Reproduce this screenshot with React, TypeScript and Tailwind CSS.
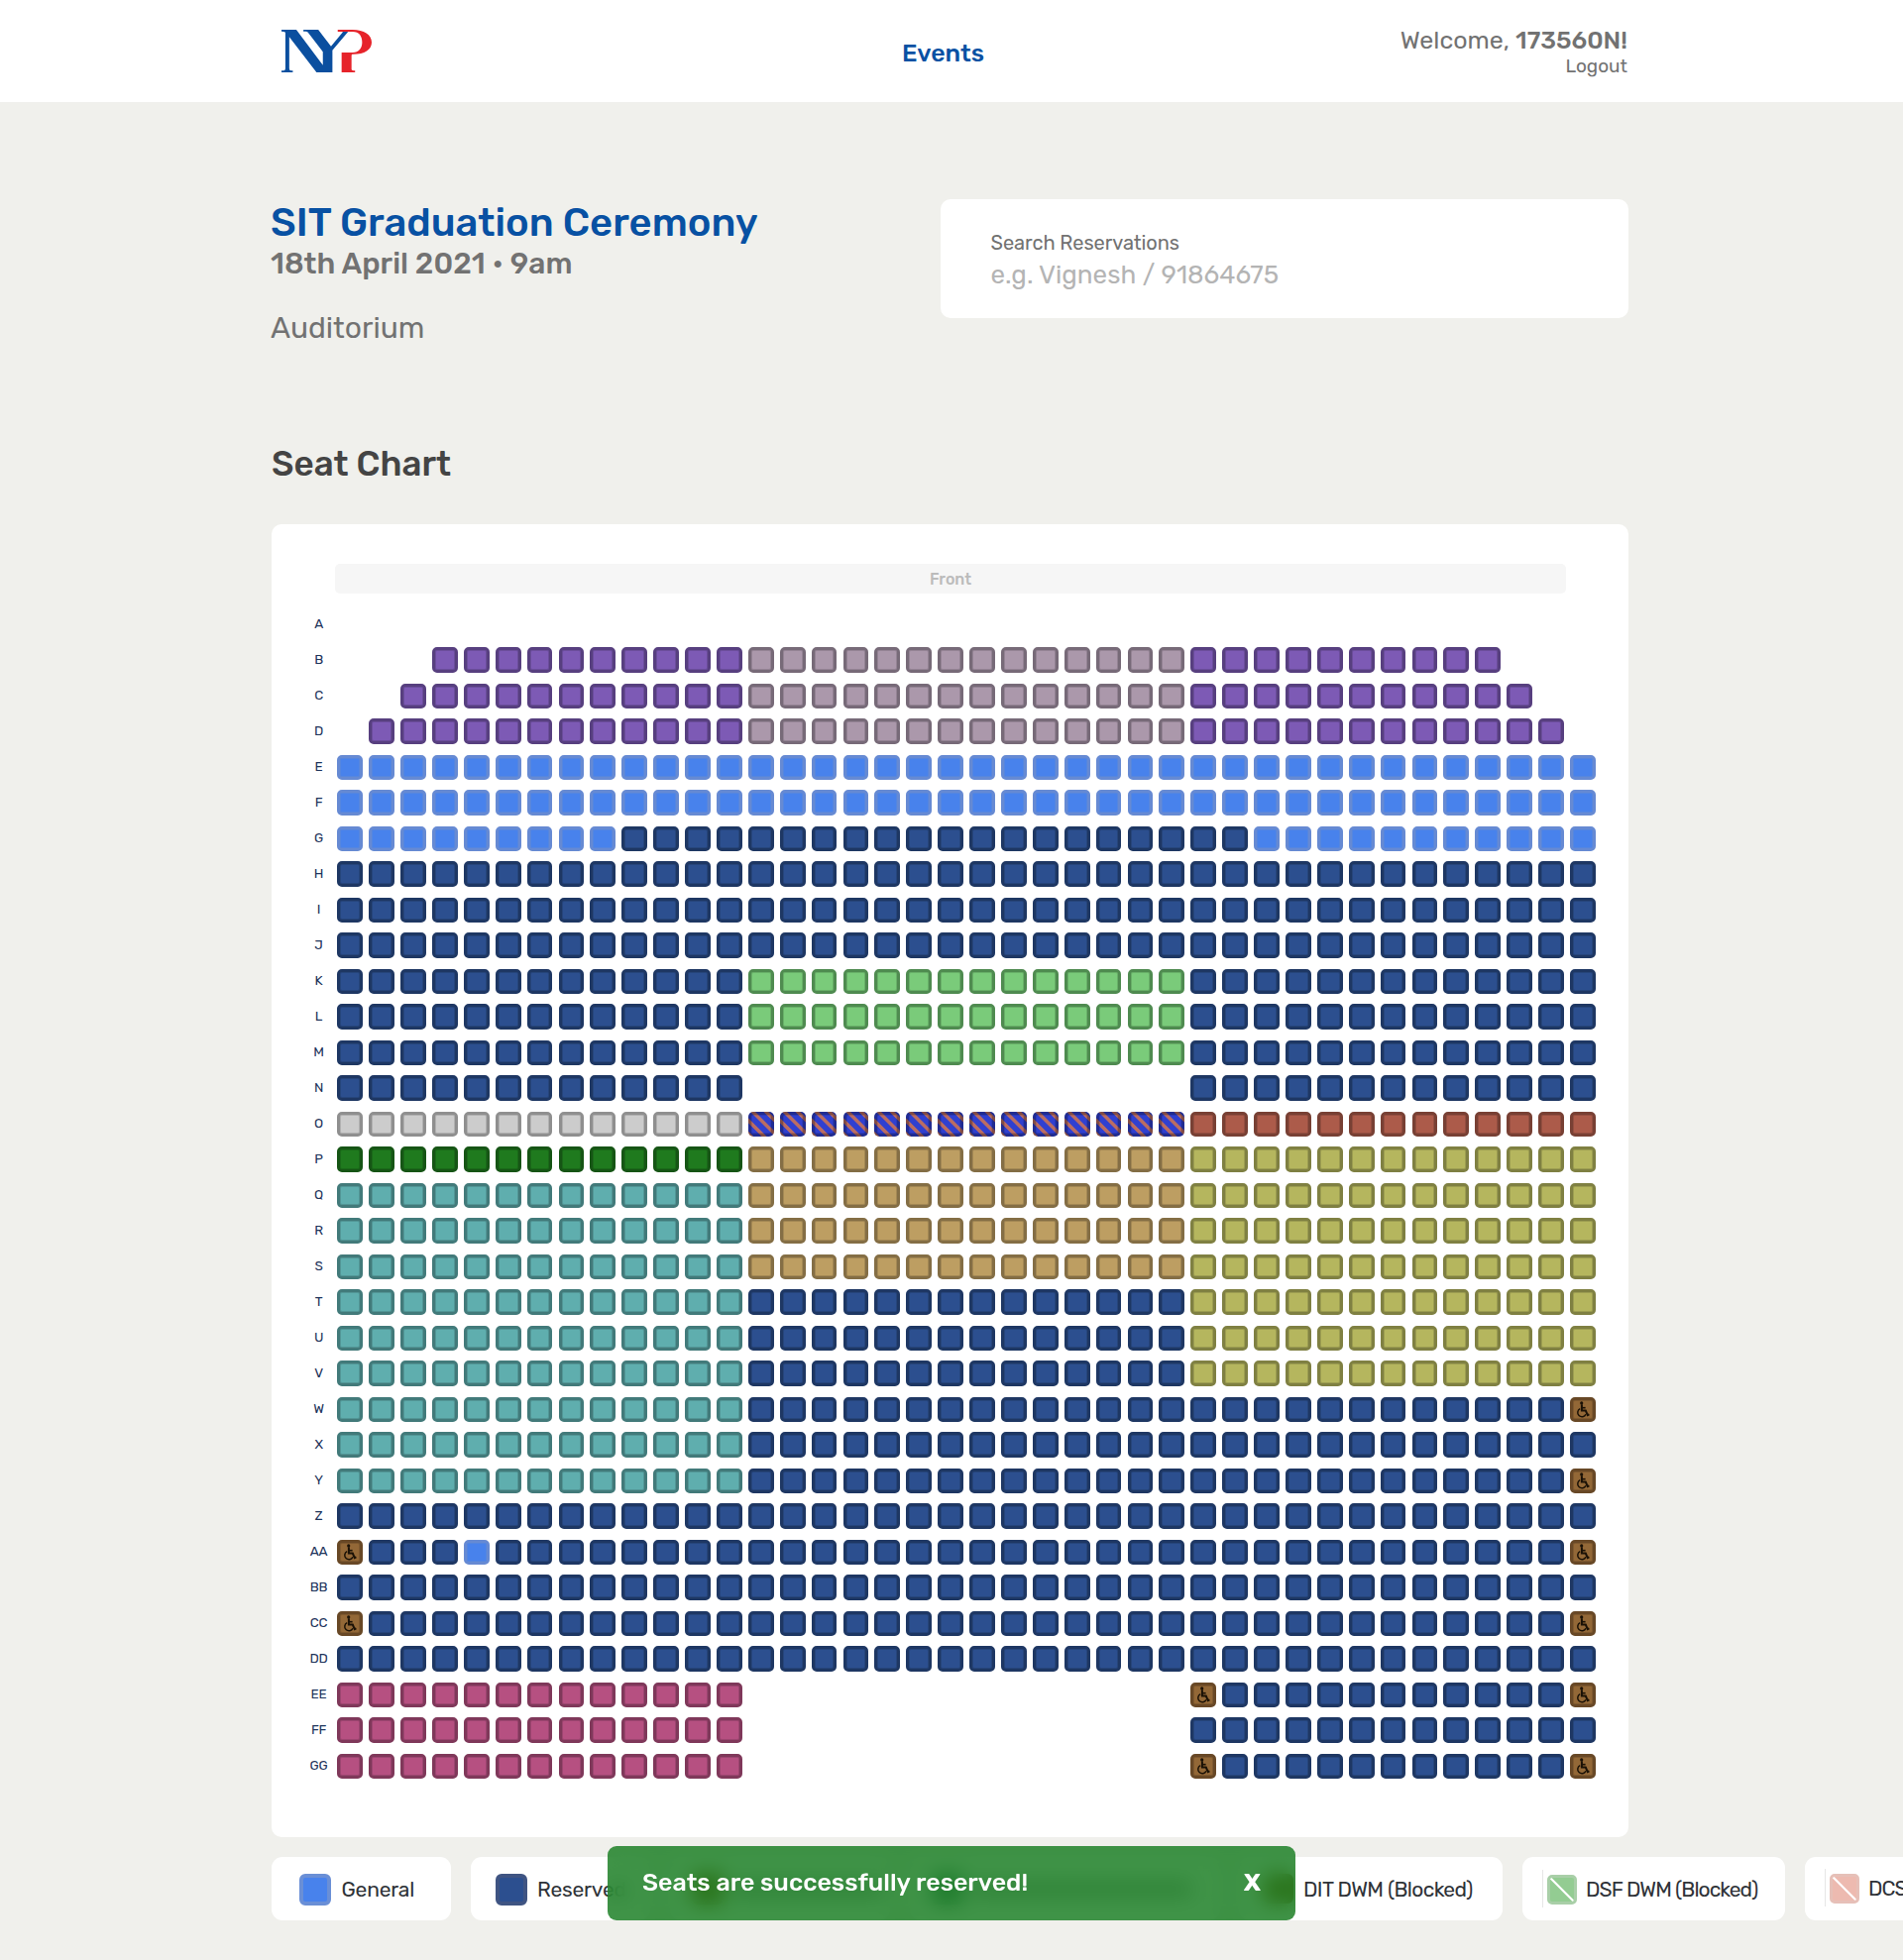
import { clsx } from "clsx";

type Kind =
  | "empty" | "purple" | "mauve" | "general" | "reserved" | "mint" | "gray" | "striped"
  | "brick" | "forest" | "tan" | "olive" | "teal" | "pink" | "wheelchair";

type Run = [Kind, number];

const FILL: Record<Kind, string> = {
  empty: "",
  purple: "bg-[#7d5ab5] border-[#573f7f] inset-ring-[#6b4d9b]",
  mauve: "bg-[#ab98ab] border-[#776a78] inset-ring-[#948394]",
  general: "bg-[#4882ec] border-[#668ad3] inset-ring-[#5586df]",
  reserved: "bg-[#2c4f8f] border-[#1e3763] inset-ring-[#26457b]",
  mint: "bg-[#7acb7a] border-[#4f8b50] inset-ring-[#68b068]",
  gray: "bg-[#cccccc] border-[#8f8f8f] inset-ring-[#b1b1b1]",
  striped:
    "border-black/30 inset-ring-black/10 bg-origin-border bg-[repeating-linear-gradient(45deg,#3040d0_0px,#bb6d62_0.6px,#bb6d62_3.4px,#3040d0_4.2px,#3040d0_9.4px)]",
  brick: "bg-[#ac5b4a] border-[#784034] inset-ring-[#944e40]",
  forest: "bg-[#1f7a1e] border-[#165515] inset-ring-[#1a6919]",
  tan: "bg-[#bd9e62] border-[#846e45] inset-ring-[#a38854]",
  olive: "bg-[#b5b65e] border-[#7f8042] inset-ring-[#9c9d51]",
  teal: "bg-[#5faeae] border-[#427a7a] inset-ring-[#529696]",
  pink: "bg-[#b65081] border-[#7f385a] inset-ring-[#9c4570]",
  wheelchair: "bg-[#936837] border-[#684826] inset-ring-[#7f592f]",
};

const all: Run[] = [["reserved", 40]];
const generalRow: Run[] = [["general", 40]];
const mintRow: Run[] = [["reserved", 13], ["mint", 14], ["reserved", 13]];
const tealTan: Run[] = [["teal", 13], ["tan", 14], ["olive", 13]];
const tealOlive: Run[] = [["teal", 13], ["reserved", 14], ["olive", 13]];
const tealWheel: Run[] = [["teal", 13], ["reserved", 26], ["wheelchair", 1]];
const pinkWheel: Run[] = [["pink", 13], ["empty", 14], ["wheelchair", 1], ["reserved", 11], ["wheelchair", 1]];

const ROWS: [string, Run[]][] = [
  ["A", [["empty", 40]]],
  ["B", [["empty", 3], ["purple", 10], ["mauve", 14], ["purple", 10], ["empty", 3]]],
  ["C", [["empty", 2], ["purple", 11], ["mauve", 14], ["purple", 11], ["empty", 2]]],
  ["D", [["empty", 1], ["purple", 12], ["mauve", 14], ["purple", 12], ["empty", 1]]],
  ["E", generalRow],
  ["F", generalRow],
  ["G", [["general", 9], ["reserved", 20], ["general", 11]]],
  ["H", all],
  ["I", all],
  ["J", all],
  ["K", mintRow],
  ["L", mintRow],
  ["M", mintRow],
  ["N", [["reserved", 13], ["empty", 14], ["reserved", 13]]],
  ["O", [["gray", 13], ["striped", 14], ["brick", 13]]],
  ["P", [["forest", 13], ["tan", 14], ["olive", 13]]],
  ["Q", tealTan],
  ["R", tealTan],
  ["S", tealTan],
  ["T", tealOlive],
  ["U", tealOlive],
  ["V", tealOlive],
  ["W", tealWheel],
  ["X", [["teal", 13], ["reserved", 27]]],
  ["Y", tealWheel],
  ["Z", all],
  ["AA", [["wheelchair", 1], ["reserved", 3], ["general", 1], ["reserved", 34], ["wheelchair", 1]]],
  ["BB", all],
  ["CC", [["wheelchair", 1], ["reserved", 38], ["wheelchair", 1]]],
  ["DD", all],
  ["EE", pinkWheel],
  ["FF", [["pink", 13], ["empty", 14], ["reserved", 13]]],
  ["GG", pinkWheel],
];

function Logo() {
  return (
    <svg className="h-[43px] w-[91px]" viewBox="67 88 255 129" preserveAspectRatio="none" aria-label="NYP">
      <path
        fill="#0b4f9f"
        d="M67 88H109L184 195V155L142 96Q140 93 136 93H129V88H171L207 138L239 97Q242 93 236 93H256L211 150V217H166L89 110V206Q89 212 94 212H99V217H67V212H73Q78 212 78 206V96Q76 93 67 93Z"
      />
      <path
        fill="#e6232a"
        d="M226 88H268C300 88 322 103 322 126C322 148 302 162 270 162C266 162 265 163 265 167V208Q265 212 275 212V217H237V157H268C286 157 295 143 295 126C295 108 287 94 268 94H226Z"
      />
    </svg>
  );
}

function WheelchairIcon() {
  return (
    <svg className="h-[17px] w-[14px] shrink-0" viewBox="0 0 14 17" fill="none" stroke="#1a1106" strokeWidth="1.6">
      <circle cx="5.7" cy="1.9" r="1.6" fill="#1a1106" stroke="none" />
      <path d="M5.9 3.2V9.6H9.8L11.8 14.2L13.4 13.4" strokeWidth="2" />
      <path d="M6 6.7H9.6" strokeWidth="1.6" />
      <path d="M4.2 7.6A4.3 4.3 0 1 0 10 13.2" strokeWidth="1.5" />
    </svg>
  );
}

function Seat({ kind, short }: { kind: Kind; short: boolean }) {
  if (kind === "empty") return <div />;
  return (
    <div
      className={clsx(
        "flex w-[25.8px] items-center justify-center rounded-[5px] border-3 inset-ring-1",
        short ? "mt-px h-[25px]" : "h-[26px]",
        FILL[kind],
      )}
    >
      {kind === "wheelchair" && <WheelchairIcon />}
    </div>
  );
}

function SeatRow({ label, runs, index }: { label: string; runs: Run[]; index: number }) {
  const seats = runs.flatMap(([kind, n]) => Array.from({ length: n }, () => kind));
  return (
    <div className="flex h-9">
      <div className="w-[35px] text-center text-[13.5px] leading-[25px] tracking-[-0.3px] text-[#1f355c]">{label}</div>
      <div className="ml-[1.3px] grid grid-cols-[repeat(40,31.9px)] items-start">
        {seats.map((k, i) => (
          <Seat key={i} kind={k} short={index % 2 === 0} />
        ))}
      </div>
    </div>
  );
}

const LEGEND_TEXT = "pt-0.5 text-[21px] leading-6 whitespace-nowrap text-[#2f3338]";
const CARD = "flex h-16 shrink-0 items-center rounded-[11px] bg-white";

function BlockedSwatch({ tone }: { tone: string }) {
  return (
    <div className="flex items-center">
      <div className="mr-1 h-[38px] w-px bg-[#e6e6e6]" />
      <div className={clsx("mt-px h-[30px] w-[30px] overflow-hidden rounded-[5px] border-3", tone)}>
        <svg className="-m-[3px] h-[30px] w-[30px]" viewBox="0 0 30 30">
          <path d="M2 2L28.5 28.5" stroke="#fff" strokeWidth="2.2" />
        </svg>
      </div>
    </div>
  );
}

function Legend() {
  return (
    <div className="mt-5 ml-px flex h-16">
      <div className={clsx(CARD, "w-[181px] pl-7")}>
        <div className="mt-0.5 h-8 w-8 rounded-[6px] border-4 border-[#6a8fd6] bg-[#4882ec]" />
        <span className={clsx(LEGEND_TEXT, "ml-[10.5px] tracking-[-0.2px]")}>General</span>
      </div>
      <div className={clsx(CARD, "ml-5 w-[181px] pl-[25px]")}>
        <div className="mt-0.5 h-8 w-8 rounded-[6px] border-4 border-[#3f5482] bg-[#2c4f8f]" />
        <span className={clsx(LEGEND_TEXT, "ml-2.5 tracking-[-0.2px]")}>Reserved</span>
      </div>
      <div className={clsx(CARD, "ml-5 w-[222px] pl-[22px]")}>
        <div className="h-8 w-8 rounded-[6px] bg-[#936020]" />
        <div className="ml-2.5 h-3.5 w-[150px] rounded bg-[#a5a5a5]" />
      </div>
      <div className={clsx(CARD, "ml-5 w-[313px] pl-[22px]")}>
        <div className="h-8 w-8 rounded-[6px] bg-[#5f8a7a]" />
        <div className="ml-2.5 h-3.5 w-[220px] rounded bg-[#a5a5a5]" />
      </div>
      <div className={clsx(CARD, "ml-[19px] w-[266px] pl-[25px]")}>
        <div className="h-[30px] w-[30px] rounded-[6px] bg-[#936020]" />
        <span className={clsx(LEGEND_TEXT, "ml-2.5 tracking-[-0.63px]")}>DIT DWM (Blocked)</span>
      </div>
      <div className={clsx(CARD, "ml-5 w-[265px] pl-5")}>
        <BlockedSwatch tone="bg-[#93cc92] border-[#a9cfa8]" />
        <span className={clsx(LEGEND_TEXT, "ml-[9px] tracking-[-0.93px]")}>DSF DWM (Blocked)</span>
      </div>
      <div className={clsx(CARD, "ml-5 w-[265px] pl-5")}>
        <div className="-mt-0.5 flex items-center">
          <BlockedSwatch tone="bg-[#edbab0] border-[#e6c0b8]" />
          <span className={clsx(LEGEND_TEXT, "ml-[9px] tracking-[-0.93px]")}>DCS DWM (Blocked)</span>
        </div>
      </div>
    </div>
  );
}

export default function App() {
  return (
    <div className="relative h-[1978px] w-full overflow-hidden bg-[#f0f0ec] font-['Rubik','Inter',sans-serif]">
      <header className="h-[103px] bg-white">
        <div className="ml-[284px] flex h-full w-[1358px] items-center">
          <Logo />
          <a className="ml-[535px] pt-[5px] text-[25px] leading-[30px] font-medium text-[#0851a3]">Events</a>
          <div className="ml-auto pt-0.5 text-right text-[#727272]">
            <div className="text-[25px] leading-[30px]">
              Welcome, <span className="font-medium">173560N!</span>
            </div>
            <div className="-mt-px text-[19px] leading-6">Logout</div>
          </div>
        </div>
      </header>

      <main className="ml-[273px] w-[1370px] pt-[98px]">
        <section className="flex h-[246px] items-start justify-between">
          <div className="pt-0.5">
            <h1 className="text-[40px] leading-[44px] font-medium text-[#0851a3]">SIT Graduation Ceremony</h1>
            <p className="-mt-px text-[30px] leading-10 font-medium text-[#727272]">18th April 2021 • 9am</p>
            <p className="mt-[25px] text-[30px] leading-10 text-[#727272]">Auditorium</p>
          </div>
          <label className="flex h-[120px] w-[694px] flex-col rounded-[10px] bg-white pt-8 pl-[50.5px]">
            <span className="text-[20px] leading-6 tracking-[-0.05px] text-[#727272]">Search Reservations</span>
            <input
              className="mt-[3px] h-9 w-[580px] text-[26px] leading-9 outline-none placeholder:text-[#b4b4b4]"
              placeholder="e.g. Vignesh / 91864675"
            />
          </label>
        </section>

        <h2 className="pl-px text-[35px] leading-[42px] font-medium text-[#444444]">Seat Chart</h2>

        <section className="mt-10 ml-px h-[1325px] rounded-[10px] bg-white pt-10">
          <div className="ml-16 h-[30px] w-[1242px] rounded-[5px] bg-[#f6f6f6] text-center text-[16px] leading-[32px] font-medium text-[#bbbbbb]">
            Front
          </div>
          <div className="mt-[18px] ml-[30px]">
            {ROWS.map(([label, runs], i) => (
              <SeatRow key={label} label={label} runs={runs} index={i} />
            ))}
          </div>
        </section>

        <Legend />
      </main>

      <div className="absolute top-[1863px] left-[613px] flex h-[75px] w-[694px] items-center justify-between rounded-[9px] bg-[rgba(15,120,25,0.8)] pr-[35px] pb-0.5 pl-[35px] text-[25px] leading-[30px] text-white backdrop-blur-[10px]">
        <span className="font-medium">Seats are successfully reserved!</span>
        <button className="font-bold">X</button>
      </div>
    </div>
  );
}
